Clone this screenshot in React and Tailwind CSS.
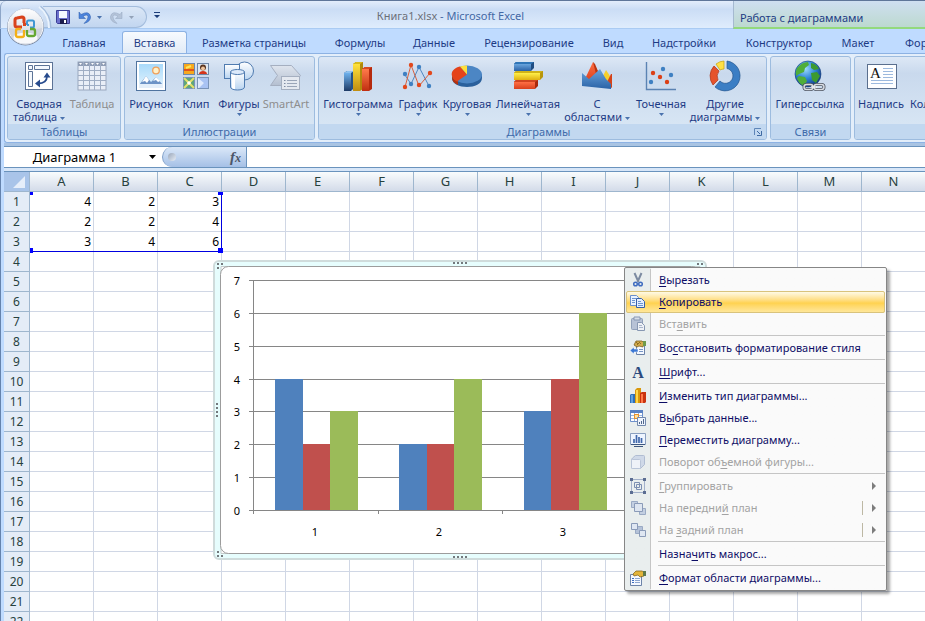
import { Fragment } from "react";

const COLUMNS = "ABCDEFGHIJKLMNOPQRSTUVWXYZ".split("");
const ROWS = Array.from({ length: 40 }, (_, i) => i + 1);
const DATA = [
  [4, 2, 3],
  [2, 2, 4],
  [3, 4, 6],
];

/* ---------- ribbon icons, 32x32 ---------- */

function Icon({ children }) {
  return (
    <svg viewBox="0 0 32 32" className="h-8 w-8 shrink-0" aria-hidden>
      {children}
    </svg>
  );
}

function Gradients() {
  const list = [
    ["gBlue", "#6aa5dd", "#2a62a6"],
    ["gBlueDark", "#6db0ec", "#1d3a66"],
    ["gYellow", "#ffe23c", "#c08d10"],
    ["gYellowFlat", "#fff04a", "#e0b010"],
    ["gRed", "#ff7a4a", "#c02e10"],
    ["gRedFlat", "#ff6f45", "#d8401c"],
    ["gPale", "#ffffff", "#b9d4f0"],
    ["gSky", "#a9dafa", "#e4f4fe"],
    ["gGray", "#dfe5ee", "#b4bfd0"],
    ["gOrb", "#ffffff", "#c3cad6"],
  ];
  return (
    <svg className="absolute h-0 w-0" aria-hidden>
      <defs>
        {list.map(([id, a, b]) => (
          <linearGradient key={id} id={id} x1="0" y1="0" x2="0" y2="1">
            <stop offset="0" stopColor={a} />
            <stop offset="1" stopColor={b} />
          </linearGradient>
        ))}
        <radialGradient id="gGlobe" cx="0.4" cy="0.3" r="0.75">
          <stop offset="0" stopColor="#9fdcff" />
          <stop offset="0.5" stopColor="#2f86d8" />
          <stop offset="1" stopColor="#0d2f78" />
        </radialGradient>
      </defs>
    </svg>
  );
}

function PivotIcon() {
  return (
    <Icon>
      <rect x="2.5" y="2.5" width="27" height="27" fill="#fff" stroke="#5c7396" />
      <path d="M5.500 5.500h4v4h-4zM11.500 5.500h15v4h-15zM5.500 11.500h4v15h-4z" fill="#f4f8fd" stroke="#5c7396" />
      <path d="M15 23.500C21 23.500 24 21 24 16" fill="none" stroke="#274b8d" strokeWidth="1.800" />
      <path d="M12 23.500l5-4v8zM24 12.500l-3.500 5h7z" fill="#274b8d" />
    </Icon>
  );
}

function TableIcon() {
  return (
    <Icon>
      <rect x="2" y="2" width="28" height="28" fill="#e9eef7" stroke="#9aa7bd" />
      <rect x="2" y="2" width="28" height="4" fill="#8f9db5" />
      <path d="M2 10.500h28M2 15.500h28M2 20.500h28M2 25.500h28M7.500 2v28M13.500 2v28M18.500 2v28M24.500 2v28" stroke="#9fadc4" />
      <path d="M3 3h3l-1.500 2zM9 3h3l-1.500 2zM15 3h3l-1.500 2zM20 3h3l-1.500 2zM26 3h3l-1.500 2z" fill="#fff" />
    </Icon>
  );
}

function PictureIcon() {
  return (
    <Icon>
      <rect x="1.500" y="1.500" width="29" height="29" fill="#fff" stroke="#50749f" />
      <rect x="4" y="4" width="24" height="24" fill="url(#gSky)" />
      <circle cx="21" cy="10.500" r="3.300" fill="#fff1c8" stroke="#f0a05a" strokeWidth="1.300" />
      <path d="M4 25l7-9 5 6 5-5 7 8v1H4z" fill="#6d93c6" />
      <path d="M11 16l-4 6 3-1 2 2 2-3zM21 17l-3 4 3-1 2 2 2-1z" fill="#fff" />
      <path d="M4 24h24v4H4z" fill="#e4effa" />
    </Icon>
  );
}

function ClipIcon() {
  return (
    <Icon>
      <rect x="3.500" y="3.500" width="11" height="11" fill="#f7a81c" stroke="#6f87a8" />
      <path d="M4 9h10v2H4z" fill="#e0541b" />
      <path d="M6 8l5-2" stroke="#ffe75a" strokeWidth="2" />
      <rect x="17.500" y="3.500" width="11" height="11" fill="#dfe7f0" stroke="#6f87a8" />
      <circle cx="23" cy="7.500" r="3" fill="#5a3520" />
      <circle cx="23" cy="8.500" r="2" fill="#f0c49c" />
      <path d="M19 14c0-4 8-4 8 0z" fill="#d5341c" />
      <rect x="3.500" y="17.500" width="11" height="11" fill="#5fa67b" stroke="#7a94b8" />
      <path d="M4 18l10 10M14 18L4 28" stroke="#e6e06a" strokeWidth="2" />
      <circle cx="9" cy="23" r="1.800" fill="#fff" />
      <rect x="17.500" y="17.500" width="11" height="11" fill="#dfeafc" stroke="#7a94b8" />
      <path d="M18 18l6 5-5 5h9V18" fill="#a9c3f3" />
    </Icon>
  );
}

function ShapesIcon() {
  return (
    <Icon>
      <circle cx="21.500" cy="11" r="9" fill="url(#gPale)" stroke="#4f7bb0" />
      <rect x="1.500" y="4.500" width="15" height="14" fill="url(#gPale)" stroke="#4f7bb0" />
      <path d="M7.500 12v15c0 4 14 4 14 0V12z" fill="url(#gPale)" stroke="#4f7bb0" />
      <path d="M9 14v14c1 1 3 1 3 1V15z" fill="#fff" />
      <ellipse cx="14.500" cy="12" rx="7" ry="2.500" fill="#dceafb" stroke="#4f7bb0" />
    </Icon>
  );
}

function SmartArtIcon() {
  return (
    <Icon>
      <path d="M0.500 5.500h21l9 10-8 10h-22l7-10z" fill="url(#gGray)" stroke="#a5afc0" />
      <rect x="11.500" y="16.500" width="18" height="13" fill="#e5e9f0" stroke="#a5afc0" />
      <path d="M17 20.500h10M17 23.500h10M17 26.500h10" stroke="#9aa5b8" />
      <path d="M14 20.500h1.500M14 23.500h1.500M14 26.500h1.500" stroke="#7f8ca3" />
    </Icon>
  );
}

function ColumnIcon() {
  return (
    <Icon>
      <path d="M2 13l3-2h7v17l-3 3H2z" fill="#255288" />
      <path d="M2 13l3-2h7l-3 2z" fill="#8cc0ee" />
      <rect x="2" y="13" width="7" height="18" fill="url(#gBlueDark)" />
      <path d="M11 4l3-2h7v27l-3 2h-7z" fill="#b08a0c" />
      <path d="M11 4l3-2h7l-3 2z" fill="#d9bc1c" />
      <rect x="11" y="4" width="7" height="27" fill="url(#gYellow)" />
      <path d="M20 9l3-2h7v22l-3 2h-7z" fill="#b52a0e" />
      <path d="M20 9l3-2h7l-3 2z" fill="#d84a24" />
      <rect x="20" y="9" width="7" height="22" fill="url(#gRed)" />
    </Icon>
  );
}

function LineIcon() {
  return (
    <Icon>
      <path d="M3 15l6 9 8-17 10 19" fill="none" stroke="#4f87c0" />
      <path d="M3 27L9 5l8 21 11-13" fill="none" stroke="#d9603c" />
      <g fill="#3f80c2">
        <circle cx="3" cy="14" r="2.200" />
        <circle cx="9" cy="24" r="2.200" />
        <circle cx="17" cy="7" r="2.200" />
        <circle cx="27" cy="26" r="2.200" />
      </g>
      <g fill="#e2481c">
        <circle cx="3" cy="27" r="2.200" />
        <circle cx="9" cy="5" r="2.200" />
        <circle cx="17" cy="25" r="2.200" />
        <circle cx="28" cy="13" r="2.200" />
      </g>
    </Icon>
  );
}

function PieIcon() {
  return (
    <Icon>
      <path d="M1 14v4c0 12 30 12 30 0v-4z" fill="#2a609c" />
      <path d="M1 14v4c0 3 2 5 6 7v-4z" fill="#b53210" />
      <ellipse cx="16" cy="14.500" rx="15" ry="9" fill="#4c86c4" />
      <path d="M16 14.500L6 21.500C-2 17-1 9 9 6.500z" fill="#e5431a" />
      <path d="M16 14.500L9 6.500q3-1 7-1z" fill="#ffdf3a" />
    </Icon>
  );
}

function BarIcon() {
  return (
    <Icon>
      <path d="M2 4l2-2h18v6l-3 3H2z" fill="#1f4d82" />
      <path d="M2 4l2-2h18l-3 2z" fill="#2f76b8" />
      <rect x="2" y="4" width="17" height="7" fill="url(#gBlue)" />
      <path d="M2 13l2-2h27v6l-3 3H2z" fill="#b8960c" />
      <path d="M2 13l2-2h27l-3 2z" fill="#d1b317" />
      <rect x="2" y="13" width="26" height="7" fill="url(#gYellowFlat)" />
      <path d="M2 22l2-2h22v6l-3 3H2z" fill="#a8280c" />
      <path d="M2 22l2-2h22l-3 2z" fill="#d04420" />
      <rect x="2" y="22" width="21" height="7" fill="url(#gRedFlat)" />
    </Icon>
  );
}

function AreaIcon() {
  return (
    <Icon>
      <path d="M20 20l5-10 4 6v8z" fill="#f5cf2c" />
      <path d="M25 24l5-10h1v14z" fill="#d4431a" />
      <path d="M3 21L12 2l10 20z" fill="url(#gRedFlat)" />
      <path d="M12 2l2 2 5 12-3 2z" fill="#b9340f" />
      <path d="M1 13l7 6 11-10 6 10 5 5v5L1 26z" fill="url(#gBlue)" />
    </Icon>
  );
}

function ScatterIcon() {
  return (
    <Icon>
      <path d="M1.500 2v27.500H31" fill="none" stroke="#5b83b3" strokeWidth="1.400" />
      <g fill="#3f80c2">
        <circle cx="6" cy="22" r="2.200" />
        <circle cx="18" cy="9" r="2.200" />
        <circle cx="26" cy="15" r="2.200" />
      </g>
      <g fill="#dc4016">
        <circle cx="8" cy="13" r="2.200" />
        <circle cx="15" cy="17" r="2.200" />
        <circle cx="22" cy="22" r="2.200" />
      </g>
    </Icon>
  );
}

function DonutIcon() {
  return (
    <Icon>
      <path d="M18 1A15 15 0 1 1 6 27l5-6A7.500 7.500 0 1 0 18 8.500z" fill="#3b7ec4" stroke="#24568f" strokeWidth="0.700" />
      <path d="M4 25A15 15 0 0 1 5 6l5 5a9 9 0 0 0-1 9z" fill="#e5532c" stroke="#ad3212" strokeWidth="0.700" />
      <path d="M7 4q4-3 8-3v8q-2 0-4 1z" fill="#ffe046" stroke="#c7a20c" strokeWidth="0.700" />
    </Icon>
  );
}

function GlobeIcon() {
  return (
    <Icon>
      <circle cx="14" cy="14" r="13" fill="url(#gGlobe)" stroke="#123a7a" strokeWidth="0.600" />
      <path d="M3 8q5-6 11-6l1 3-4 3-1 4-5 2-3 2q-1-4 1-8zM5 16l6 1 2 4-3 5q-6-3-7-8z" fill="#4fae3a" />
      <path d="M17 3q6 1 8 6l-5 1-3-2zM17 13l6-1 3 4-4 7-4-3z" fill="#3d9a30" />
      <rect x="10" y="24.500" width="9" height="5" rx="2.500" fill="none" stroke="#4c5360" strokeWidth="3" />
      <rect x="20" y="24.500" width="10" height="5" rx="2.500" fill="none" stroke="#4c5360" strokeWidth="3" />
      <rect x="10" y="24.500" width="9" height="5" rx="2.500" fill="none" stroke="#d9dde3" strokeWidth="1.400" />
      <rect x="20" y="24.500" width="10" height="5" rx="2.500" fill="none" stroke="#d9dde3" strokeWidth="1.400" />
      <path d="M17 27h6" stroke="#eef0f3" strokeWidth="1.600" />
    </Icon>
  );
}

function TextBoxIcon() {
  return (
    <Icon>
      <rect x="2.500" y="4.500" width="29" height="24" fill="#fdfeff" stroke="#5a6f8e" />
      <text x="5" y="18" fontFamily="Liberation Serif, serif" fontSize="15" fill="#111">
        A
      </text>
      <path d="M18 8.500h10M18 11.500h10M18 14.500h10M18 17.500h10M6 20.500h22M6 23.500h22" stroke="#9cb9de" />
    </Icon>
  );
}

function HeaderIcon() {
  return (
    <Icon>
      <rect x="5.500" y="2.500" width="21" height="27" fill="#fff" stroke="#5a6f8e" />
      <path d="M8 6.500h16M8 25.500h16" stroke="#e08b2c" strokeWidth="2" />
    </Icon>
  );
}

function Arrow({ className = "" }) {
  return (
    <svg viewBox="0 0 5 3" className={`inline-block h-[3px] w-[5px] shrink-0 ${className}`} aria-hidden>
      <path d="M0 0h5L2.500 3z" fill="currentColor" />
    </svg>
  );
}

const GROUPS = [
  {
    title: "Таблицы",
    width: "w-[114px]",
    items: [
      { icon: PivotIcon, lines: ["Сводная", "таблица"], arrow: true, width: "w-[62px]" },
      { icon: TableIcon, lines: ["Таблица"], disabled: true, width: "w-[44px]" },
    ],
  },
  {
    title: "Иллюстрации",
    width: "w-[191px]",
    items: [
      { icon: PictureIcon, lines: ["Рисунок"], width: "w-[52px]" },
      { icon: ClipIcon, lines: ["Клип"], width: "w-[38px]" },
      { icon: ShapesIcon, lines: ["Фигуры"], arrow: true, width: "w-[48px]" },
      { icon: SmartArtIcon, lines: ["SmartArt"], disabled: true, width: "w-[46px]" },
    ],
  },
  {
    title: "Диаграммы",
    width: "w-[449px]",
    launcher: true,
    items: [
      { icon: ColumnIcon, lines: ["Гистограмма"], arrow: true, width: "w-[78px]" },
      { icon: LineIcon, lines: ["График"], arrow: true, width: "w-[42px]" },
      { icon: PieIcon, lines: ["Круговая"], arrow: true, width: "w-[56px]" },
      { icon: BarIcon, lines: ["Линейчатая"], arrow: true, width: "w-[66px]" },
      { icon: AreaIcon, lines: ["С", "областями"], arrow: true, width: "w-[72px]" },
      { icon: ScatterIcon, lines: ["Точечная"], arrow: true, width: "w-[56px]" },
      { icon: DonutIcon, lines: ["Другие", "диаграммы"], arrow: true, width: "w-[72px]" },
    ],
  },
  {
    title: "Связи",
    width: "w-[81px]",
    items: [{ icon: GlobeIcon, lines: ["Гиперссылка"], width: "w-[78px]" }],
  },
  {
    title: "Текст",
    width: "w-[320px]",
    items: [
      { icon: TextBoxIcon, lines: ["Надпись"], width: "w-[52px]" },
      { icon: HeaderIcon, lines: ["Колонтитулы"], width: "w-[76px]" },
    ],
  },
];

function RibbonButton({ item }) {
  const { icon: Glyph, lines, arrow, disabled, width } = item;
  const twoLines = lines.length > 1;
  return (
    <button
      type="button"
      disabled={disabled}
      className={`flex shrink-0 flex-col items-center pt-[3px] text-[11px] leading-[13px] whitespace-nowrap ${width} ${
        disabled ? "text-[#8d8d8d]" : "text-[#1e3b85]"
      }`}
    >
      <Glyph />
      <span className="mt-[5px] text-center">
        {lines[0]}
        {twoLines ? (
          <>
            <br />
            {lines[1]} <Arrow className="align-middle text-[#4a72ad]" />
          </>
        ) : null}
      </span>
      {arrow && !twoLines ? <Arrow className="mt-[3px] text-[#4a72ad]" /> : null}
    </button>
  );
}

function RibbonGroup({ group }) {
  return (
    <section
      aria-label={group.title}
      className={`flex shrink-0 flex-col overflow-hidden rounded-[3px] border border-[#9dbcdf] bg-linear-to-b from-[#dde8f5] from-0% via-[#c9d9ed] via-20% to-[#dbe9f6] to-100% ${group.width}`}
    >
      <div className="flex flex-1">
        {group.items.map((item) => (
          <RibbonButton key={item.lines[0]} item={item} />
        ))}
      </div>
      <div className="flex h-[15px] items-center bg-[#c2d8f0] px-1 text-[11px] text-[#3e6aaa]">
        <span className="flex-1 pt-px text-center leading-[16px]">{group.title}</span>
        {group.launcher ? (
          <button type="button" aria-label="Все диаграммы">
            <svg viewBox="0 0 8 8" className="h-2 w-2" aria-hidden>
              <path d="M0.500 7V0.500H7" fill="none" stroke="#5f86b8" />
              <path d="M3 3l3 3M7.500 3v4.500H3" fill="none" stroke="#3f6aa3" />
            </svg>
          </button>
        ) : null}
      </div>
    </section>
  );
}

/* ---------- title bar and tabs ---------- */

function OfficeButton() {
  return (
    <button type="button" aria-label="Кнопка Office" className="absolute top-[7px] left-[6px] z-10 h-10 w-10">
      <svg viewBox="0 0 40 40" className="h-10 w-10 overflow-visible" aria-hidden>
        <path d="M34 0A26 26 0 0 1 44 21" fill="none" stroke="#a3bcdc" strokeWidth="3" />
        <path d="M33 0A26 26 0 0 1 43 21" fill="none" stroke="#eaf3fd" strokeWidth="2" />
        <circle cx="19.500" cy="20" r="18.500" fill="#7d8ba3" />
        <circle cx="19.500" cy="19.500" r="17.500" fill="url(#gOrb)" stroke="#f7f9fc" strokeWidth="1" />
        <path d="M3 21a16.500 16.500 0 0 0 33 0q-16 4-33 0z" fill="#d0d5df" />
        <ellipse cx="19.500" cy="31" rx="12" ry="5.500" fill="#f7f8fb" />
        <g fill="none" strokeWidth="3">
          <path d="M18 16V12q0-2-2-2l-5 1q-2 0-2 2v5q0 2 2 2h5" stroke="#d9421c" />
          <path d="M21 18v-3q0-1.500 1.500-1.500h4q1.500 0 1.500 1.500v4q0 1.500-1.500 1.500H24" stroke="#3f97d3" strokeWidth="2" />
          <path d="M18 23v5q0 2-2 2h-4q-2 0-2-2v-4q0-2 2-2h3" stroke="#f4b018" strokeWidth="2.300" />
          <path d="M21 23v4q0 2 2 2h4q2 0 2-2v-3q0-2-2-2h-3" stroke="#66a832" strokeWidth="2.300" />
        </g>
        <path d="M17 16h3v3h-3z" fill="#d9421c" />
        <path d="M21 17h2v2h-2z" fill="#3f97d3" />
      </svg>
    </button>
  );
}

function QuickAccess() {
  return (
    <div className="mt-[5px] ml-[42px] flex h-[22px] w-[104px] items-center rounded-r-full border border-l-0 border-[#a3bcdc] bg-linear-to-b from-[#dbe7f6] to-[#c2d6f0] pl-[13px]">
      <button type="button" aria-label="Сохранить">
        <svg viewBox="0 0 14 14" className="h-[14px] w-[14px]" aria-hidden>
          <path d="M0.500 0.500h13v13h-12l-1-1z" fill="#6c70cc" stroke="#3a3d96" />
          <path d="M3 1h8v7H3z" fill="#f4f8ff" />
          <path d="M4 9h7v5H4z" fill="#1b1c4d" />
          <path d="M8 10h2v3H8z" fill="#fff" />
        </svg>
      </button>
      <button type="button" aria-label="Отменить" className="ml-2 flex items-center gap-[6px] text-[#4a72ad]">
        <svg viewBox="0 0 13 13" className="h-[13px] w-[13px]" aria-hidden>
          <path d="M1 1v6.500h6.500L5 5.500q4-3 5 0 0.500 3-4 7 7-2 6.500-7Q11-1 3 3.500z" fill="#4c84dc" stroke="#2858a8" strokeWidth="0.500" />
        </svg>
        <Arrow />
      </button>
      <button type="button" aria-label="Вернуть" disabled className="ml-2 flex items-center gap-[6px] text-[#93a2b8]">
        <svg viewBox="0 0 13 13" className="h-[13px] w-[13px]" aria-hidden>
          <path d="M12 1v6.500H5.500L8 5.500q-4-3-5 0-0.500 3 4 7-7-2-6.500-7Q2-1 10 3.500z" fill="#b4c3d8" stroke="#94a6c0" strokeWidth="0.500" />
        </svg>
        <Arrow />
      </button>
    </div>
  );
}

function TitleBar() {
  return (
    <header className="flex h-[29px] shrink-0 border-t border-[#5f7699] bg-linear-to-b from-[#e3edfb] from-0% via-[#cbddf5] via-30% to-[#e0edfd] to-100%">
      <div className="flex w-[733px] shrink-0 rounded-tl-md border-b border-l border-b-[#aacbf3] border-l-[#8ea6c8]">
        <QuickAccess />
        <button type="button" aria-label="Настройка панели" className="ml-[7px] self-center text-[#1c3d7a]">
          <svg viewBox="0 0 6 6" className="h-[6px] w-[6px]" aria-hidden>
            <path d="M0 0h6v1H0zM0 3h6L3 6z" fill="currentColor" />
          </svg>
        </button>
        <h1 className="mt-2 flex-1 pl-2 text-center text-[11px] leading-[14px] text-[#4468a5]">
          <span className="text-[#6b6f78]">Книга1.xlsx</span> - Microsoft Excel
        </h1>
      </div>
      <div className="flex-1 border-b-2 border-l border-b-[#93d97c] border-l-[#a5b9d0] bg-linear-to-b from-[#cfdff1] to-[#bcd9cf] pt-[10px] pl-[6px] text-[11px] leading-[14px] text-[#1e3b85]">
        Работа с диаграммами
      </div>
    </header>
  );
}

const TABS = [
  ["Главная", "w-[70px]"],
  ["Вставка", "w-[65px]"],
  ["Разметка страницы", "w-[134px]"],
  ["Формулы", "w-[78px]"],
  ["Данные", "w-[70px]"],
  ["Рецензирование", "w-[120px]"],
  ["Вид", "w-[48px]"],
  ["Надстройки", "w-[94px]"],
  ["Конструктор", "w-[96px]"],
  ["Макет", "w-[62px]"],
  ["Формат", "w-[74px]"],
];

function TabStrip() {
  return (
    <nav role="tablist" className="flex h-6 shrink-0 overflow-hidden bg-[#bfdbff] pt-[2px] pl-[45px]">
      {TABS.map(([name, width]) => (
        <button
          key={name}
          type="button"
          role="tab"
          aria-selected={name === "Вставка"}
          className={`shrink-0 text-center text-[11px] whitespace-nowrap text-[#1e3b85] ${width} ${
            name === "Вставка"
              ? "ml-[3px] rounded-t-[3px] border border-b-0 border-[#8db2e3] bg-linear-to-b from-[#f7fafe] to-[#e1ebf7] leading-[22px]"
              : "leading-[24px]"
          }`}
        >
          {name}
        </button>
      ))}
    </nav>
  );
}

function FormulaBar() {
  return (
    <div className="flex h-[22px] shrink-0 border-y border-[#6a93bd] bg-white">
      <div className="flex w-[156px] shrink-0 items-center">
        <input
          aria-label="Имя"
          defaultValue="Диаграмма 1"
          className="w-[141px] bg-transparent text-center text-[13px] leading-[20px] text-black outline-none"
        />
        <button type="button" aria-label="Список имён" className="ml-1">
          <svg viewBox="0 0 7 4" className="h-1 w-[7px]" aria-hidden>
            <path d="M0 0h7L3.500 4z" fill="#000" />
          </svg>
        </button>
      </div>
      <div className="ml-[2px] flex w-[85px] shrink-0 items-center justify-between rounded-l-full border-r border-l border-r-[#6a93bd] border-l-[#7f9fc8] bg-linear-to-b from-[#dbe8f8] to-[#a5c0e6] px-[5px]">
        <span className="h-2 w-2 rounded-full bg-linear-to-br from-[#9aa7ba] to-[#e8eef6]" />
        <button
          type="button"
          aria-label="Вставить функцию"
          className="font-['Liberation_Serif',serif] text-[15px] leading-[18px] font-bold text-[#4c5668] italic"
        >
          f<span className="text-[12px]">x</span>
        </button>
      </div>
      <input aria-label="Строка формул" className="min-w-0 flex-1 bg-white px-1 text-[13px] outline-none" />
    </div>
  );
}

/* ---------- sheet ---------- */

function Grid() {
  return (
    <table className="w-[1690px] table-fixed border-separate border-spacing-0 text-[13px] leading-[19px]">
      <thead>
        <tr className="h-5">
          <th aria-label="Выделить всё" className="w-[26px] border-r border-b border-[#9eb6ce] bg-[#a9c4e9] p-0">
            <svg viewBox="0 0 25 19" className="block h-[19px] w-[25px]" aria-hidden>
              <path d="M21 4v12H9z" fill="#e6eefa" />
            </svg>
          </th>
          {COLUMNS.map((c) => (
            <th
              key={c}
              scope="col"
              className="w-[64px] border-r border-b border-[#9eb6ce] bg-linear-to-b from-[#f9fcfd] to-[#d3dbe9] p-0 font-normal text-[#27413e]"
            >
              {c}
            </th>
          ))}
        </tr>
      </thead>
      <tbody>
        {ROWS.map((r) => (
          <tr key={r} className="h-5">
            <th
              scope="row"
              className="border-r border-b border-[#9eb6ce] bg-[#e4ecf7] p-0 text-[12px] font-normal text-[#27413e]"
            >
              {r}
            </th>
            {COLUMNS.map((c, i) => (
              <td key={c} className="border-r border-b border-[#d0d7e5] p-0 pr-[2px] text-right text-[12px] text-black">
                {DATA[r - 1]?.[i]}
              </td>
            ))}
          </tr>
        ))}
      </tbody>
    </table>
  );
}

function DataRange() {
  return (
    <div className="pointer-events-none absolute top-5 left-[26px] h-[60px] w-[192px] border-r border-b border-[#0000e0]">
      <span className="absolute top-0 left-0 h-[3px] w-[3px] bg-[#0000ff]" />
      <span className="absolute top-0 -right-[2px] h-[3px] w-[5px] bg-[#0000ff]" />
      <span className="absolute -bottom-[2px] left-0 h-[5px] w-[3px] bg-[#0000ff]" />
      <span className="absolute -right-[2px] -bottom-[2px] h-[5px] w-[5px] bg-[#0000ff]" />
    </div>
  );
}

const SERIES_COLORS = ["#4f81bd", "#c0504d", "#9bbb59"];
const BASE = 250;

function ChartObject() {
  // 494x301 frame, plot area starts 40px from the left edge
  return (
    <svg viewBox="0 0 494 301" className="absolute top-[88px] left-[209px] h-[301px] w-[494px]" role="img" aria-label="Гистограмма">
      <rect x="1" y="1" width="492" height="298" rx="5" fill="#e6fdfd" stroke="#cfdbdb" strokeWidth="2" />
      <path d="M8 6.500h479v287H8z" fill="#fff" stroke="#c4cccc" />
      <rect x="7.500" y="6.500" width="479" height="287" rx="8" fill="#fff" stroke="#9c9c9c" />
      <g fill="#74797d">
        {[0, 4, 8, 12].map((d) => (
          <Fragment key={d}>
            <rect x={240 + d} y="2" width="2" height="2" />
            <rect x={240 + d} y="296" width="2" height="2" />
            <rect x="3" y={143 + d} width="2" height="2" />
          </Fragment>
        ))}
        <path d="M4 3h2v2H4zM8 3h2v2H8zM4 7h2v2H4zM4 291h2v2H4zM4 295h2v2H4zM8 295h2v2H8zM484 3h2v2h-2zM488 3h2v2h-2z" />
      </g>
      {[0, 1, 2, 3, 4, 5, 6, 7].map((v) => {
        const y = Math.round(BASE - v * 32.86) + 0.5;
        return (
          <g key={v}>
            <path d={`M36 ${y}H413`} stroke="#868686" />
            <text x="24" y={y + 4} textAnchor="middle" fontSize="11" fill="#000">
              {v}
            </text>
          </g>
        );
      })}
      <path d="M40.500 20v234M165.500 250v4M289.500 250v4M413.500 250v4" stroke="#868686" />
      {DATA.map((row, r) => (
        <g key={r}>
          {row.map((v, i) => {
            const top = Math.round(BASE - v * 32.86);
            const x = Math.round(62 + r * 124.300 + i * 27.500);
            return <rect key={i} x={x} y={top} width="28" height={BASE - top} fill={SERIES_COLORS[i]} />;
          })}
          <text x={102 + r * 124} y="276" textAnchor="middle" fontSize="11" fill="#000">
            {r + 1}
          </text>
        </g>
      ))}
    </svg>
  );
}

/* ---------- context menu, 16x16 icons ---------- */

function Small({ children }) {
  return (
    <svg viewBox="0 0 16 16" className="h-4 w-4" aria-hidden>
      {children}
    </svg>
  );
}

const cutIcon = (
  <Small>
    <path d="M4.500 1l4 9M11.500 1l-4 9" stroke="#7c8ba1" strokeWidth="2" fill="none" />
    <circle cx="5.500" cy="12" r="1.800" fill="none" stroke="#3f6cc0" strokeWidth="1.500" />
    <circle cx="10.500" cy="12" r="1.800" fill="none" stroke="#3f6cc0" strokeWidth="1.500" />
  </Small>
);
const copyIcon = (
  <Small>
    <path d="M0.500 1.500h6l2 2v8h-8z" fill="#e9f2ff" stroke="#6a90cc" />
    <path d="M2 4.500h4M2 6.500h3M2 8.500h3" stroke="#6c94d0" />
    <path d="M6.500 4.500h5l3 3v6h-8z" fill="#e4eeff" stroke="#3761a8" />
    <path d="M8 7.500h3M8 9.500h5M8 11.500h5" stroke="#6c94d0" />
  </Small>
);
const pasteIcon = (
  <Small>
    <rect x="1.500" y="2.500" width="11" height="11" rx="1" fill="#b7c2d6" stroke="#92a1ba" />
    <path d="M4 1h6v3H4z" fill="#d6dde8" stroke="#8797b2" />
    <path d="M7.500 6.500h4l3 3v5h-7z" fill="#eef1f6" stroke="#8797b2" />
    <path d="M9 9.500h3M9 11.500h4" stroke="#a9b6cc" />
  </Small>
);
const resetIcon = (
  <Small>
    <path d="M6.500 4.500h8v10h-8z" fill="#f4f8ff" stroke="#6c83a8" />
    <path d="M4 5l2-4h6l2 2-1 4-4-1-2 1z" fill="#d3ab4c" stroke="#6f5212" strokeWidth="0.700" />
    <path d="M6 2l2 2M9 2l2 2M7 5l2-2" stroke="#6f5212" strokeWidth="0.700" />
    <path d="M13 1h3v5h-3z" fill="#6f9a4a" />
    <path d="M9 9.500h4M9 11.500h4" stroke="#7896c4" />
    <path d="M0 10.500L4 7v2h4v3H4v2z" fill="#3c78d4" stroke="#fff" strokeWidth="0.500" />
  </Small>
);
const fontIcon = (
  <Small>
    <text x="8" y="14" textAnchor="middle" fontFamily="Liberation Serif, serif" fontSize="16" fontWeight="700" fill="#2b4a7e">
      A
    </text>
  </Small>
);
const typeIcon = (
  <Small>
    <path d="M0 7l1-1h4v9H0z" fill="#2f6fb8" />
    <path d="M1 7h2v8H1z" fill="#5fa0e0" />
    <path d="M5 2l2-2h4v15H5z" fill="#d9980c" />
    <path d="M6 2h2v13H6z" fill="#ffd84a" />
    <path d="M10 5l2-1h4v10l-1 1h-5z" fill="#c93310" />
    <path d="M11 6h2v9h-2z" fill="#ff7a4a" />
  </Small>
);
const dataIcon = (
  <Small>
    <path d="M0.500 0.500h12v11h-12z" fill="#fff" stroke="#6d90cc" />
    <path d="M0 0h13v3H0z" fill="#5a82c4" />
    <path d="M1 5.500h11M1 8.500h11M4.500 3v8M8.500 3v8" stroke="#9ab6de" />
    <rect x="4.500" y="4.500" width="4" height="4" fill="#ffe1a0" stroke="#e8902c" />
    <path d="M7.500 7.500h8v8h-8z" fill="#eef4fd" stroke="#7289ad" />
    <path d="M9.500 14v-2M11.500 14v-3M13.500 14V9" stroke="#51698e" />
  </Small>
);
const moveIcon = (
  <Small>
    <path d="M0.500 1.500h15v11h-15z" fill="#eef5ff" stroke="#8ba0c0" />
    <path d="M4 11V7M6.500 11V3M9 11V5M11.500 11V6" stroke="#4068ac" strokeWidth="1.700" />
    <path d="M1 12.500h14M4 14.500h9" stroke="#3c5680" />
  </Small>
);
const rotateIcon = (
  <Small>
    <path d="M1.500 5.500q0-1 4-4h8q1 0 1 1v8l-4 4h-8q-1 0-1-1z" fill="#cfd9e8" stroke="#b0bdd2" />
    <rect x="1.500" y="5.500" width="9" height="9" rx="1" fill="#eef2f8" stroke="#b9c5d8" />
  </Small>
);
const groupIcon = (
  <Small>
    <path d="M1.500 1.500h13v13h-13z" fill="none" stroke="#a3b1ca" />
    <path d="M4.500 4.500h5v5h-5zM6.500 6.500h5v5h-5z" fill="none" stroke="#7c8fb2" />
    <path d="M0 0h3v3H0zM13 0h3v3h-3zM0 13h3v3H0zM13 13h3v3h-3z" fill="#5b6d92" />
  </Small>
);
const frontIcon = (
  <Small>
    <path d="M1.500 1.500h6v6h-6zM9.500 8.500h6v6h-6z" fill="#c3cfe1" stroke="#9aaac4" />
    <path d="M4.500 3.500h8v8h-8z" fill="#dde5f0" stroke="#8a9bb8" />
  </Small>
);
const backIcon = (
  <Small>
    <path d="M5.500 4.500h7v7h-7z" fill="#b4c2d8" stroke="#9aaac4" />
    <path d="M1.500 1.500h6v6h-6zM9.500 8.500h6v6h-6z" fill="#dfe7f2" stroke="#8a9bb8" />
  </Small>
);
const formatIcon = (
  <Small>
    <path d="M0.500 4.500h11v11h-11z" fill="#f4f8ff" stroke="#6c83a8" />
    <path d="M2 8.500h2M2 10.500h2M2 12.500h2" stroke="#3c6cc0" />
    <path d="M5 8.500h5M5 10.500h5M5 12.500h5" stroke="#8ca6cf" />
    <path d="M3 4l3-3h6l2 1v4l-4 1-2-2-4 1z" fill="#e3b53a" stroke="#7a5a12" strokeWidth="0.700" />
    <path d="M13 1h3v5h-3z" fill="#5f7a4a" />
  </Small>
);

// label is split as [before, access key, after]
const MENU = [
  { icon: cutIcon, label: ["", "В", "ырезать"] },
  { icon: copyIcon, label: ["", "К", "опировать"], active: true },
  { icon: pasteIcon, label: ["Вст", "а", "вить"], disabled: true, divider: true },
  { icon: resetIcon, label: ["Во", "с", "становить форматирование стиля"], divider: true },
  { icon: fontIcon, label: ["", "Ш", "рифт..."], divider: true },
  { icon: typeIcon, label: ["", "И", "зменить тип диаграммы..."] },
  { icon: dataIcon, label: ["В", "ы", "брать данные..."] },
  { icon: moveIcon, label: ["", "П", "ереместить диаграмму..."] },
  { icon: rotateIcon, label: ["Поворот об", "ъ", "емной фигуры..."], disabled: true, divider: true },
  { icon: groupIcon, label: ["", "Г", "руппировать"], disabled: true, submenu: true },
  { icon: frontIcon, label: ["На передни", "й", " план"], disabled: true, submenu: true, split: true },
  { icon: backIcon, label: ["На ", "з", "адний план"], disabled: true, submenu: true, split: true, divider: true },
  { label: ["Назна", "ч", "ить макрос..."], divider: true },
  { icon: formatIcon, label: ["", "Ф", "ормат области диаграммы..."] },
];

function ContextMenu() {
  return (
    <div
      role="menu"
      className="absolute top-[95px] left-[620px] w-[263px] rounded-[2px] border border-[#868686] bg-linear-to-r from-[#e9eeee] from-[26px] via-[#fafafa] via-[26px] to-[#fafafa] p-px shadow-[3px_3px_3px_rgba(0,0,0,0.35)]"
    >
      {MENU.map((item) => (
        <Fragment key={item.label.join("")}>
          <button
            type="button"
            role="menuitem"
            disabled={item.disabled}
            className={`flex h-[22px] w-full items-center text-left text-[11px] leading-[16px] whitespace-nowrap ${
              item.disabled ? "text-[#a3a3a3]" : "text-[#0d0d66]"
            } ${
              item.active
                ? "rounded-[2px] bg-linear-to-b from-[#fffdf0] from-0% via-[#ffd24f] via-55% to-[#ffe9a0] to-100% outline outline-offset-[-1px] outline-[#d9c37c]"
                : ""
            }`}
          >
            <span
              className={`flex h-[22px] w-[25px] shrink-0 items-center justify-center border-r ${
                item.active ? "border-transparent" : "border-[#c5c5c5]"
              }`}
            >
              {item.icon}
            </span>
            <span className="flex-1 pl-2">
              {item.label[0]}
              <u className="underline-offset-2">{item.label[1]}</u>
              {item.label[2]}
            </span>
            {item.split ? <span className="mr-[9px] h-[14px] w-px bg-[#bdb8a4]" /> : null}
            {item.submenu ? (
              <svg viewBox="0 0 4 8" className="mr-[9px] h-2 w-1" aria-hidden>
                <path d="M0 0l4 4-4 4z" fill="#7d7d7d" />
              </svg>
            ) : null}
          </button>
          {item.divider ? (
            <div className="flex h-[2px]">
              <div className="w-[25px] border-r border-[#c5c5c5]" />
              <div className="ml-[7px] h-px flex-1 bg-[#c5c5c5]" />
            </div>
          ) : null}
        </Fragment>
      ))}
    </div>
  );
}

export default function App() {
  return (
    <div className="relative flex h-screen flex-col overflow-hidden bg-[#bfdbff] font-['Noto_Sans','Open_Sans',sans-serif]">
      <Gradients />
      <TitleBar />
      <OfficeButton />
      <div className="flex min-h-0 flex-1 flex-col border-l border-[#6583ad] pl-[3px]">
        <TabStrip />
        <div className="flex h-[90px] shrink-0 gap-[3px] overflow-hidden rounded-l-[3px] border border-r-0 border-[#8db2e3] bg-[#e3eefa] px-[2px] pt-[2px] pb-[2px]">
          {GROUPS.map((group) => (
            <RibbonGroup key={group.title} group={group} />
          ))}
        </div>
        <div className="h-[3px] shrink-0 bg-[#a9c4e3]" />
        <FormulaBar />
        <div className="h-[4px] shrink-0 border-b border-[#6a93bd] bg-[#d7e6f8]" />
        <main className="relative min-h-0 flex-1 overflow-hidden bg-white">
          <Grid />
          <DataRange />
          <ChartObject />
          <ContextMenu />
        </main>
      </div>
    </div>
  );
}
